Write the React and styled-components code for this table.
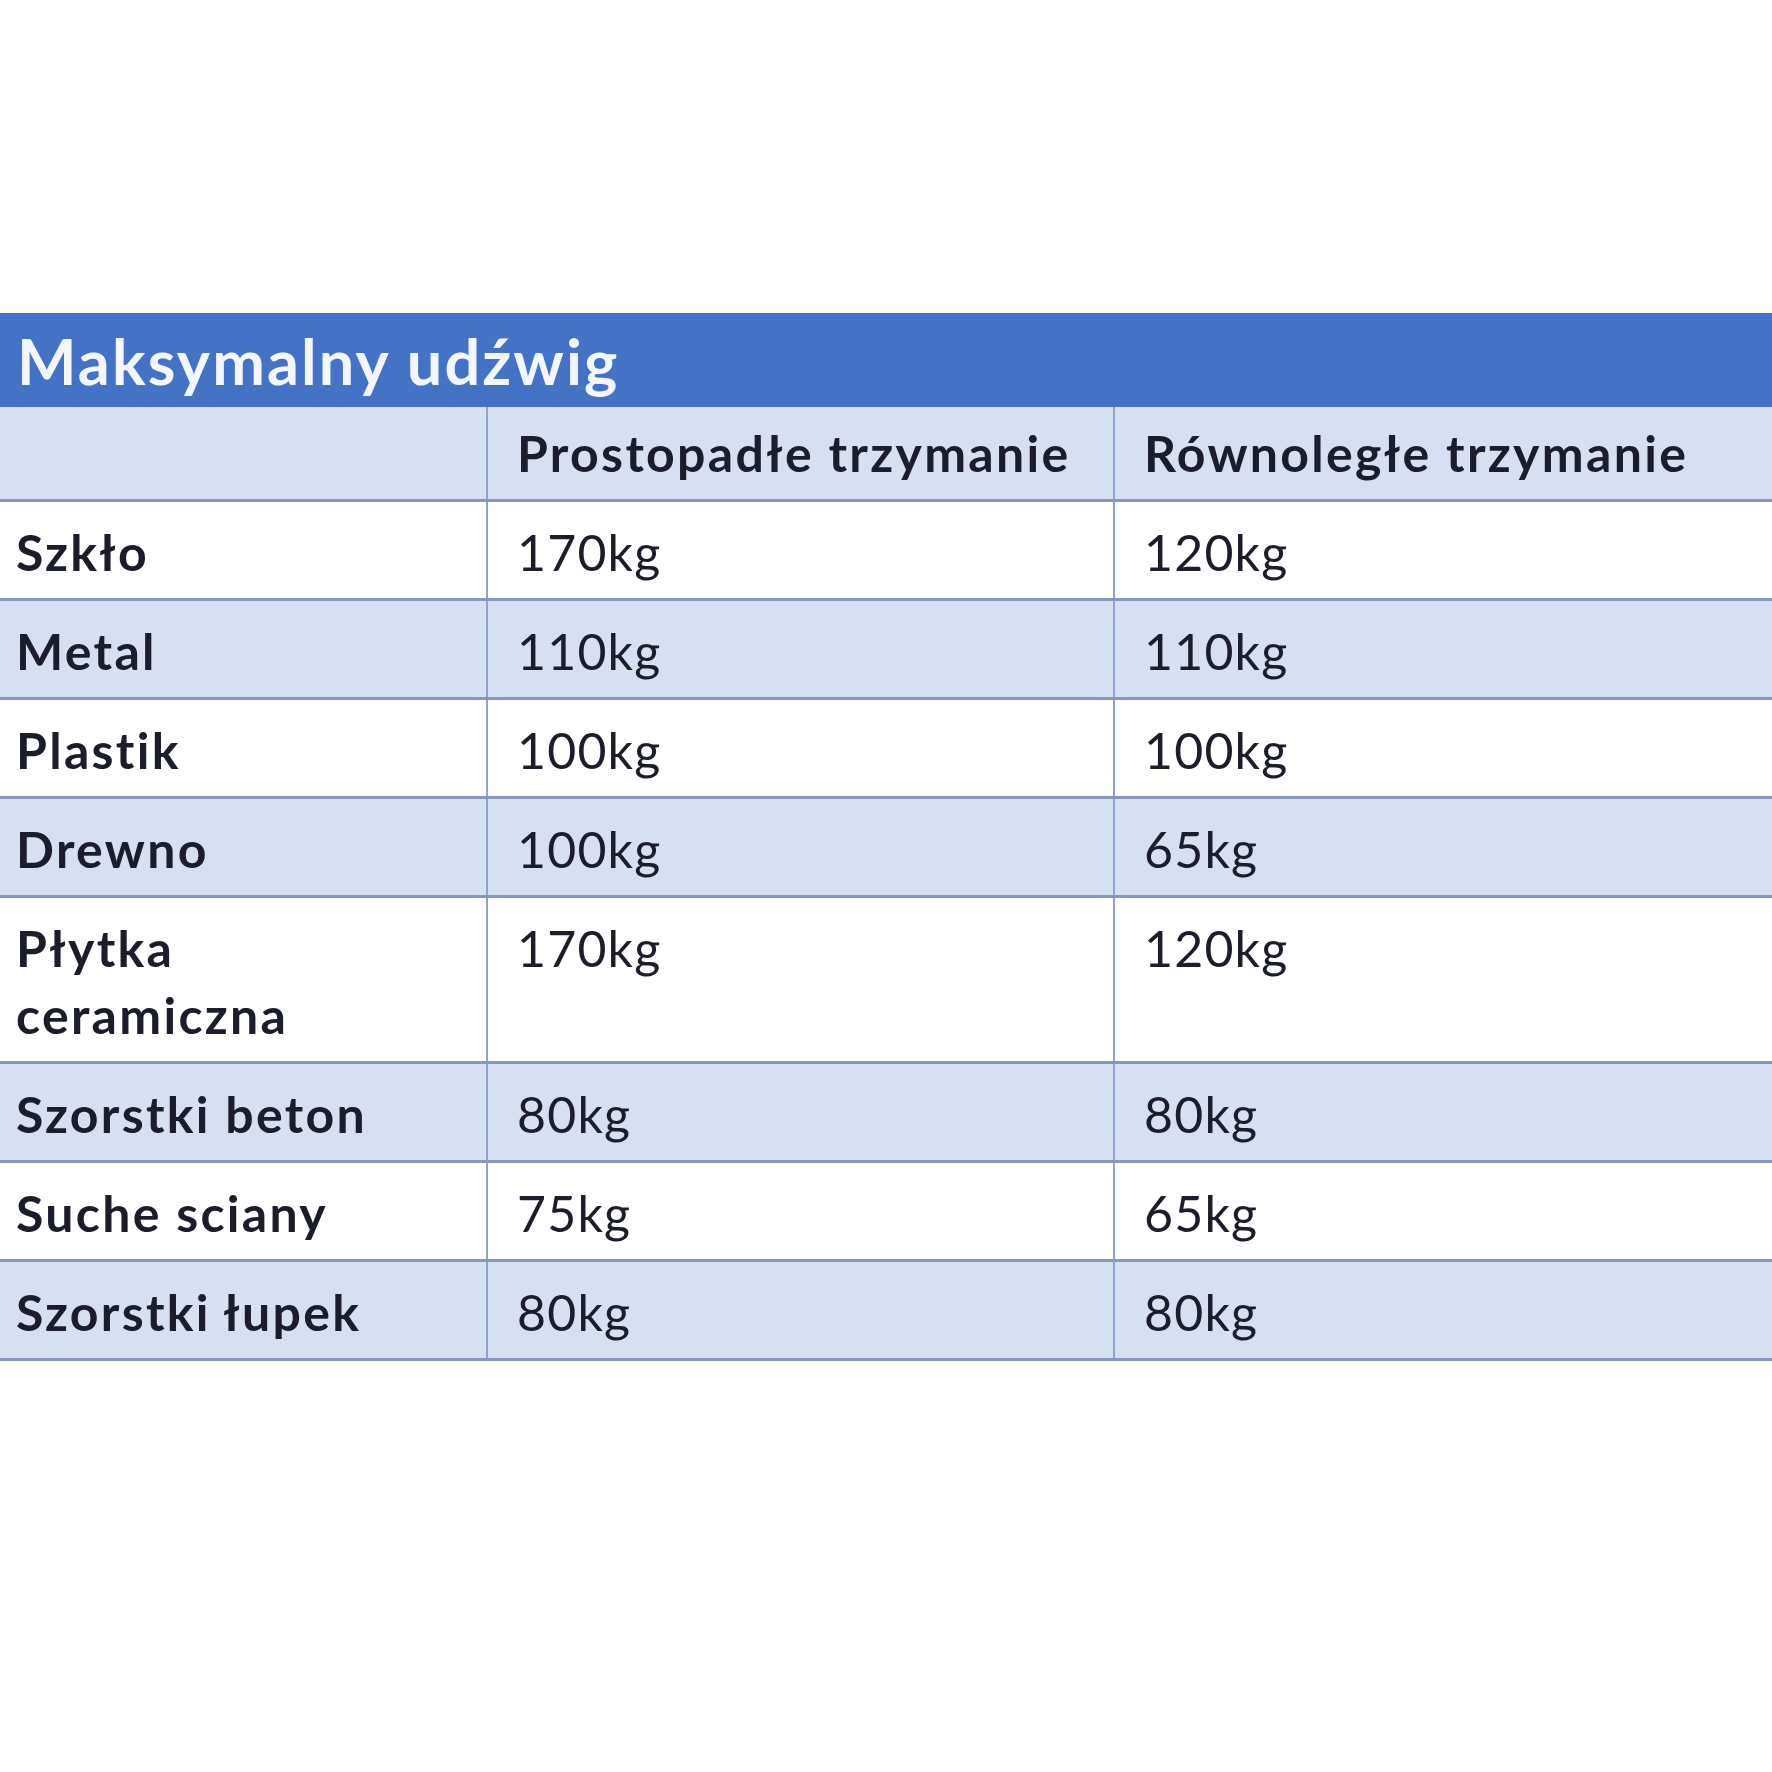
import React from "react";
import styled, { createGlobalStyle } from "styled-components";

const Global = createGlobalStyle`
  html, body { margin: 0; padding: 0; background: #ffffff; }
  body { font-family: Lato, "Open Sans", "DejaVu Sans", sans-serif; color: #1b1d2b; }
`;

const Page = styled.div`
  width: 1772px;
  height: 1772px;
  padding-top: 313px;
  box-sizing: border-box;
  background: #ffffff;
`;

const Table = styled.div`
  display: flex;
  flex-direction: column;
  width: 1772px;
`;

const TitleBar = styled.div`
  height: 94px;
  background: #4472c4;
  display: flex;
  align-items: center;
  padding-left: 17px;
  box-sizing: border-box;
`;

const Title = styled.h1`
  margin: 0;
  font-size: 63px;
  line-height: 1;
  font-weight: 700;
  color: #f3f6fc;
  letter-spacing: 2.1px;
`;

const Row = styled.div`
  display: grid;
  grid-template-columns: 486px 627px 1fr;
  background: ${(p) => (p.$band ? "#d7e0f1" : "#ffffff")};
  border-bottom: 3px solid #8796bd;
`;

const Cell = styled.div`
  padding-top: ${(p) => (p.$head ? "13px" : "17px")};
  padding-bottom: 12px;
  padding-left: ${(p) => (p.$first ? "16px" : "29px")};
  padding-right: 12px;
  border-left: ${(p) => (p.$first ? "none" : "2px solid #8ea3d2")};
  font-size: 50px;
  line-height: 67px;
  font-weight: ${(p) => (p.$bold ? 700 : 400)};
  letter-spacing: ${(p) => (p.$bold ? "2.3px" : "1.2px")};
  white-space: pre-line;
`;

const header = ["", "Prostopadłe trzymanie", "Równoległe trzymanie"];

const rows = [
  ["Szkło", "170kg", "120kg"],
  ["Metal", "110kg", "110kg"],
  ["Plastik", "100kg", "100kg"],
  ["Drewno", "100kg", "65kg"],
  ["Płytka\nceramiczna", "170kg", "120kg"],
  ["Szorstki beton", "80kg", "80kg"],
  ["Suche sciany", "75kg", "65kg"],
  ["Szorstki łupek", "80kg", "80kg"],
];

export default function App() {
  return (
    <>
      <Global />
      <Page>
        <Table>
          <TitleBar>
            <Title>Maksymalny udźwig</Title>
          </TitleBar>
          <Row $band>
            {header.map((h, i) => (
              <Cell key={i} $first={i === 0} $bold $head>
                {h}
              </Cell>
            ))}
          </Row>
          {rows.map((r, ri) => (
            <Row key={ri} $band={ri % 2 === 1}>
              {r.map((c, ci) => (
                <Cell key={ci} $first={ci === 0} $bold={ci === 0}>
                  {c}
                </Cell>
              ))}
            </Row>
          ))}
        </Table>
      </Page>
    </>
  );
}
